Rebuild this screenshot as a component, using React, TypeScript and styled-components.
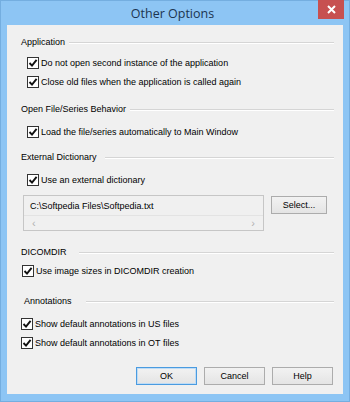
import styled, { createGlobalStyle } from 'styled-components';

const GlobalStyle = createGlobalStyle`
  html, body {
    margin: 0;
    padding: 0;
    background: #ffffff;
  }
  body {
    font-family: "Liberation Sans", Arial, sans-serif;
  }
`;

const Check = ({ label, indent = 6, mt = 3 }: { label: string; indent?: number; mt?: number }) => (
  <CheckRow $indent={indent} $mt={mt}>
    <Box>
      <svg width="10" height="10" viewBox="0 0 10 10">
        <polyline points="1.5,5 4,7.6 8.6,1.8" fill="none" stroke="#111" strokeWidth="1.9" />
      </svg>
    </Box>
    <span>{label}</span>
  </CheckRow>
);

const Group = ({ title, gap = 4, indent = 0, mt = 11 }: { title: string; gap?: number; indent?: number; mt?: number }) => (
  <Header $mt={mt} $indent={indent}>
    <span>{title}</span>
    <Rule $gap={gap} />
  </Header>
);

const App = () => {
  return (
    <>
      <GlobalStyle />
      <Frame>
        <TitleBar>
          <span />
          <Title>Other Options</Title>
          <CloseButton>
            <svg width="9" height="9" viewBox="0 0 9 9">
              <path d="M1 1 L8 8 M8 1 L1 8" stroke="#fff" strokeWidth="2" />
            </svg>
          </CloseButton>
        </TitleBar>

        <Client>
          <Group title="Application" mt={0} />
          <Check label="Do not open second instance of the application" mt={5} />
          <Check label="Close old files when the application is called again" />

          <Group title="Open File/Series Behavior" />
          <Check label="Load the file/series automatically to Main Window" mt={7} />

          <Group title="External Dictionary" gap={8} mt={9} />
          <Check label="Use an external dictionary" mt={7} />

          <FieldRow>
            <Field>
              <FieldText>C:\Softpedia Files\Softpedia.txt</FieldText>
              <ScrollBar>
                <span>‹</span>
                <span>›</span>
              </ScrollBar>
            </Field>
            <SelectButton>Select...</SelectButton>
          </FieldRow>

          <Group title="DICOMDIR" gap={12} mt={13} />
          <Check label="Use image sizes in DICOMDIR creation" indent={1} />

          <Group title="Annotations" gap={14} indent={3} mt={14} />
          <Check label="Show default annotations in US files" indent={0} mt={7} />
          <Check label="Show default annotations in OT files" indent={0} />

          <ButtonRow>
            <Button $default>OK</Button>
            <Button>Cancel</Button>
            <Button>Help</Button>
          </ButtonRow>
        </Client>
      </Frame>
    </>
  );
};

const Frame = styled.div`
  width: 350px;
  height: 402px;
  box-sizing: border-box;
  background: #8dc5f4;
  border: 1px solid #74aee0;
  display: flex;
  flex-direction: column;
  padding: 0 6px 7px 6px;
`;

const TitleBar = styled.div`
  height: 25px;
  margin: -1px -6px 0 -6px;
  padding: 0 5px 0 0;
  display: grid;
  grid-template-columns: 1fr auto 1fr;
  align-items: center;
`;

const Title = styled.div`
  font-family: "Open Sans", "Noto Sans", sans-serif;
  font-size: 12.5px;
  color: #1c3450;
  line-height: 16px;
  margin-top: 2px;
`;

const CloseButton = styled.div`
  justify-self: end;
  align-self: start;
  width: 26px;
  height: 19px;
  background: #c75050;
  display: flex;
  align-items: center;
  justify-content: center;
`;

const Client = styled.div`
  flex: 1;
  background: #f0f0f0;
  padding: 9px 9px 0 14px;
  display: flex;
  flex-direction: column;
  font-size: 9px;
  color: #000;
`;

const Header = styled.div<{ $mt: number; $indent: number }>`
  height: 16px;
  margin-top: ${(p) => p.$mt}px;
  padding-left: ${(p) => p.$indent}px;
  display: flex;
  align-items: center;
  white-space: nowrap;
`;

const Rule = styled.div<{ $gap: number }>`
  flex: 1;
  height: 0;
  margin-left: ${(p) => p.$gap}px;
  margin-top: 1px;
  border-top: 1px solid #d5d5d5;
  border-bottom: 1px solid #ffffff;
`;

const CheckRow = styled.div<{ $indent: number; $mt: number }>`
  height: 16px;
  margin-top: ${(p) => p.$mt}px;
  padding-left: ${(p) => p.$indent}px;
  display: flex;
  align-items: center;
  gap: 2px;
  white-space: nowrap;
`;

const Box = styled.div`
  width: 12px;
  height: 12px;
  box-sizing: border-box;
  border: 1px solid #333333;
  background: #ffffff;
  display: flex;
  align-items: center;
  justify-content: center;
  flex-shrink: 0;
`;

const FieldRow = styled.div`
  margin-top: 7px;
  padding-left: 2px;
  display: flex;
  align-items: flex-start;
  gap: 7px;
`;

const Field = styled.div`
  width: 241px;
  height: 36px;
  box-sizing: border-box;
  border: 1px solid #c6c6c6;
  display: flex;
  flex-direction: column;
`;

const FieldText = styled.div`
  height: 19px;
  padding-left: 6px;
  display: flex;
  align-items: center;
  border-bottom: 1px solid #e3e3e3;
`;

const ScrollBar = styled.div`
  flex: 1;
  display: flex;
  align-items: center;
  justify-content: space-between;
  padding: 0 8px 0 8px;
  color: #b0b0b0;
  font-size: 11px;
`;

const SelectButton = styled.div`
  width: 56px;
  height: 18px;
  margin-top: 1px;
  box-sizing: border-box;
  border: 1px solid #acacac;
  background: linear-gradient(#f2f2f2, #e4e4e4);
  display: flex;
  align-items: center;
  justify-content: center;
`;

const ButtonRow = styled.div`
  margin-top: 16px;
  padding-right: 1px;
  display: flex;
  justify-content: flex-end;
  gap: 7px;
`;

const Button = styled.div<{ $default?: boolean }>`
  width: 61px;
  height: 18px;
  box-sizing: border-box;
  border: 1px solid ${(p) => (p.$default ? '#4a9be0' : '#acacac')};
  box-shadow: ${(p) => (p.$default ? 'inset 0 0 0 1px #bfdcf5' : 'none')};
  background: linear-gradient(#f2f2f2, #e4e4e4);
  display: flex;
  align-items: center;
  justify-content: center;
`;

export default App;
